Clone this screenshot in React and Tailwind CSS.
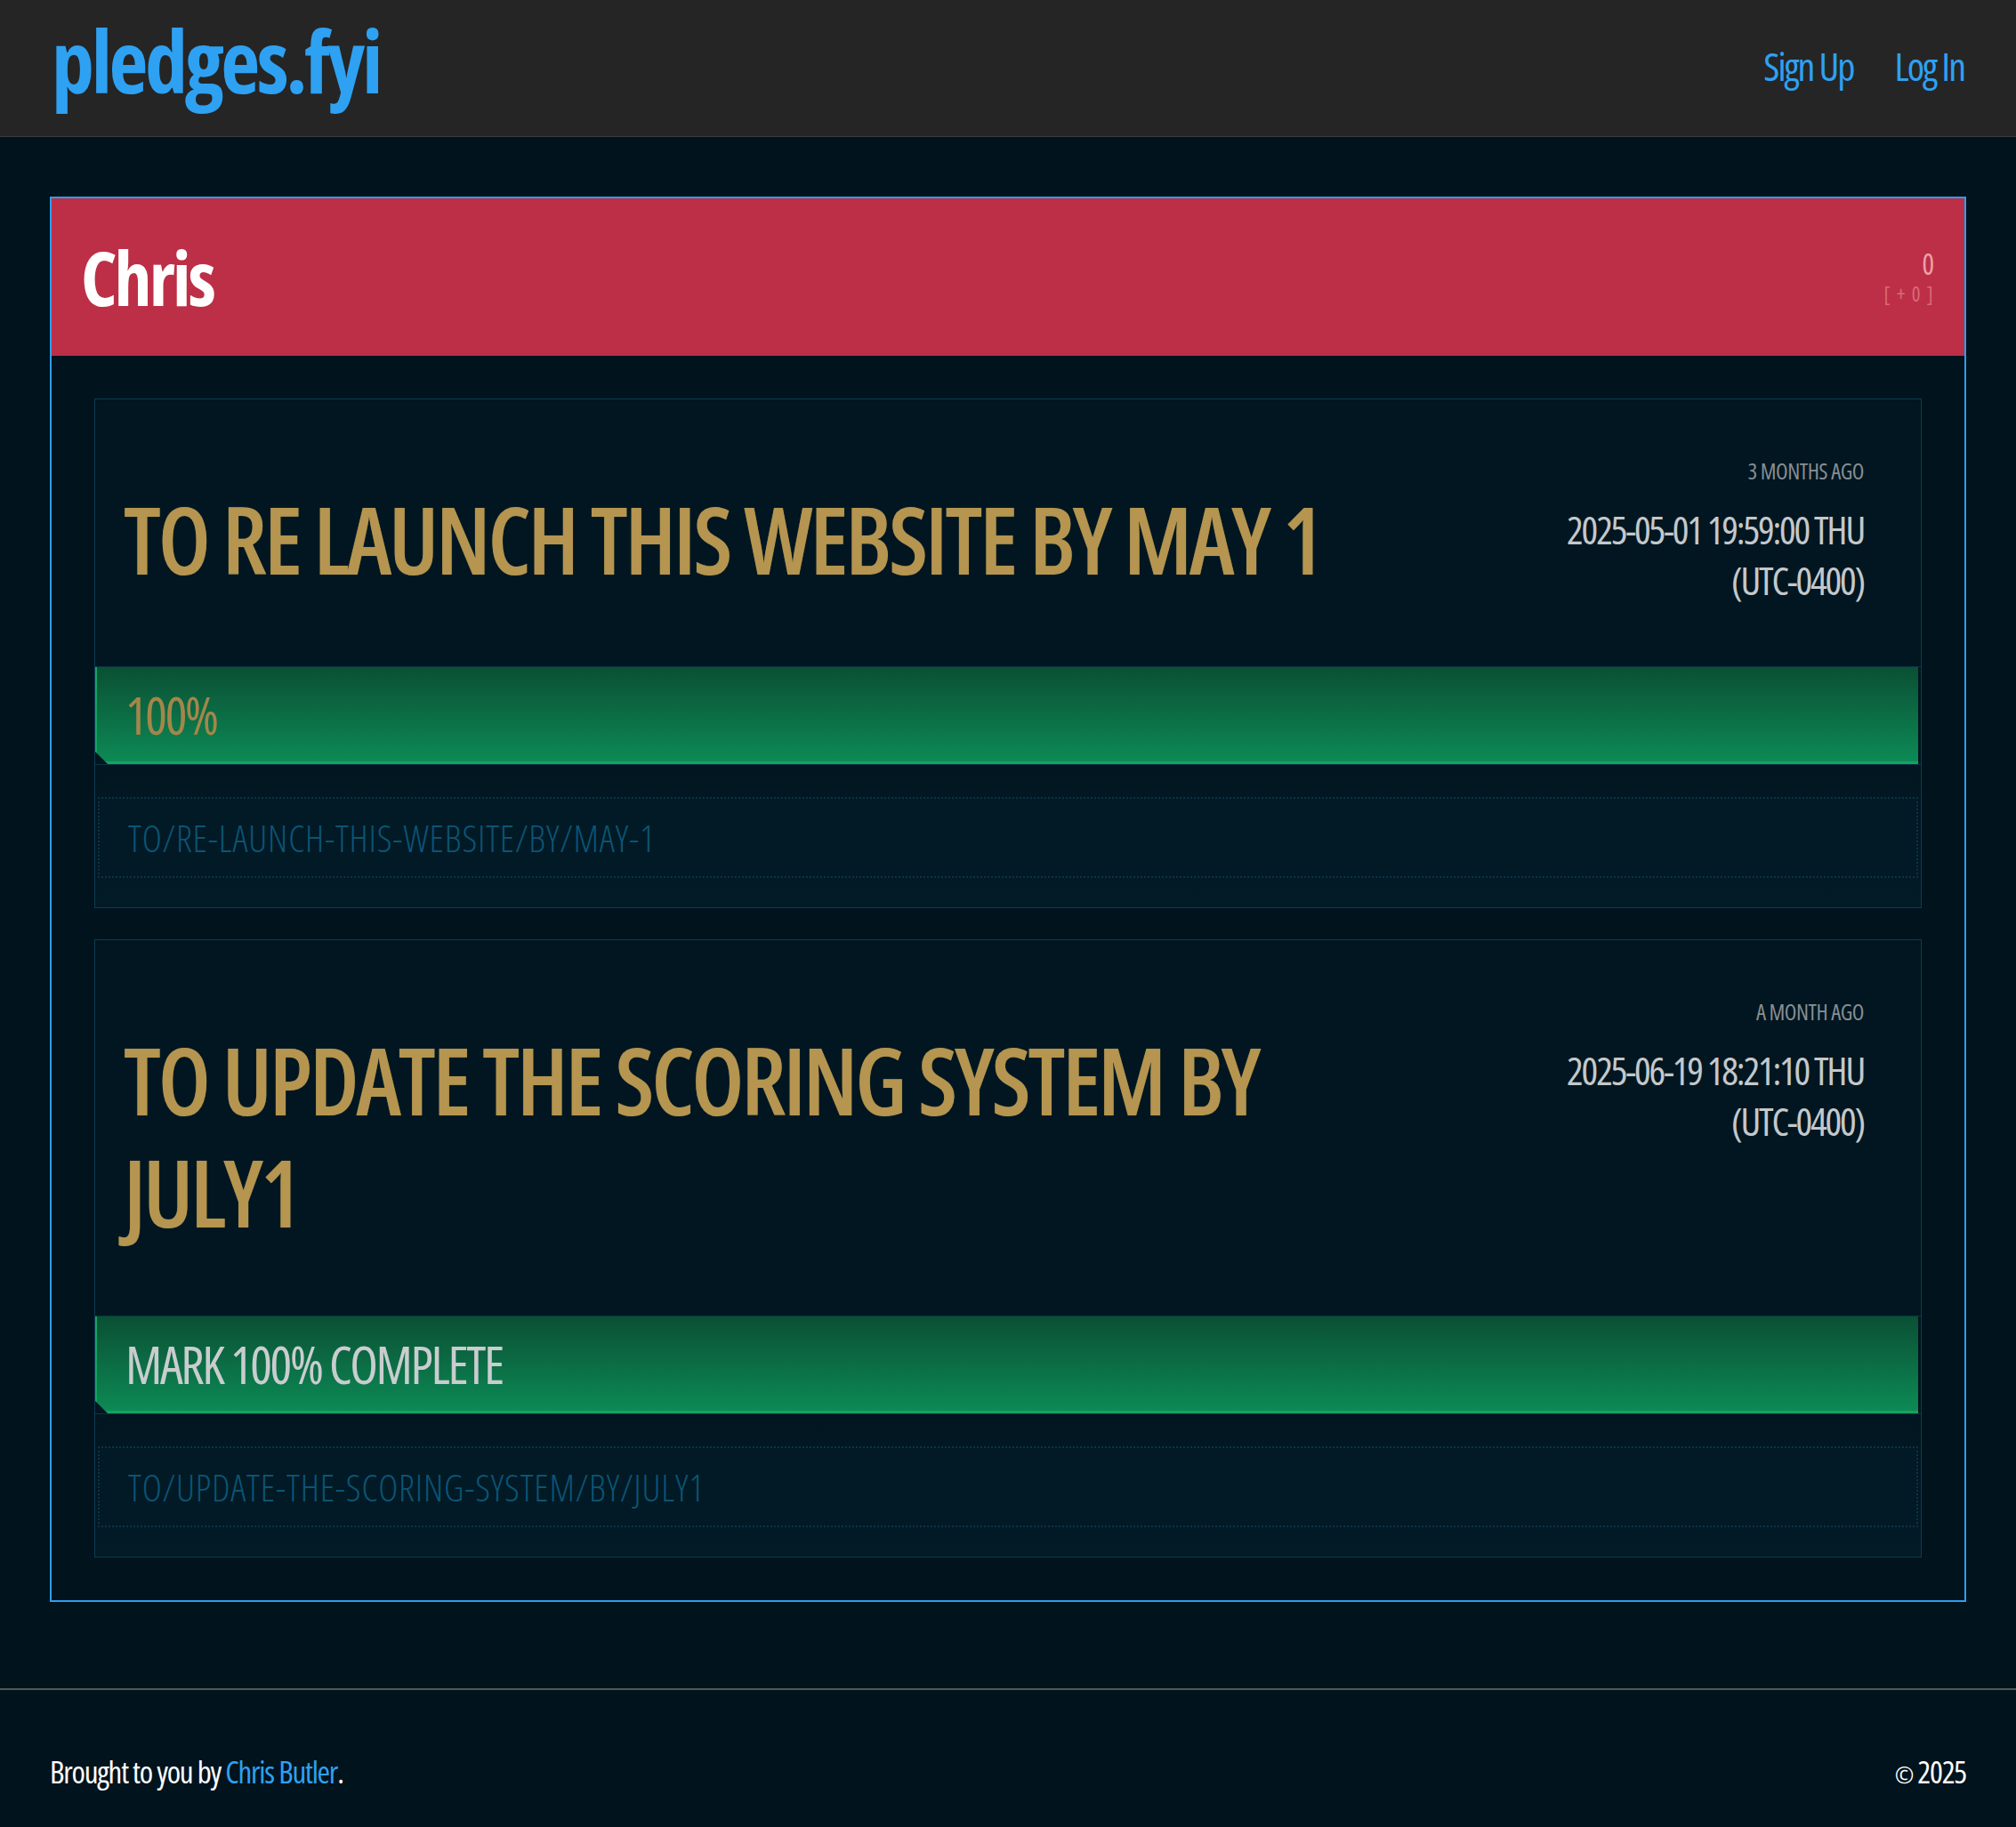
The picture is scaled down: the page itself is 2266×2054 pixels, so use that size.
const pledges = [
  {
    title: "TO RE LAUNCH THIS WEBSITE BY MAY 1",
    ago: "3 MONTHS AGO",
    date: "2025-05-01 19:59:00 THU",
    tz: "(UTC-0400)",
    bar: "100%",
    barClass: "text-[#a4864a]",
    slug: "TO/RE-LAUNCH-THIS-WEBSITE/BY/MAY-1",
  },
  {
    title: "TO UPDATE THE SCORING SYSTEM BY JULY1",
    ago: "A MONTH AGO",
    date: "2025-06-19 18:21:10 THU",
    tz: "(UTC-0400)",
    bar: "MARK 100% COMPLETE",
    barClass: "text-[#c9cdcf]",
    slug: "TO/UPDATE-THE-SCORING-SYSTEM/BY/JULY1",
  },
];

function PledgeCard({ pledge }) {
  return (
    <div className="border border-[#0d3b52] bg-[#011620]">
      {/* Title + date */}
      <div className="flex items-start justify-between pt-16 pb-[68px]">
        <h2 className="mt-[30px] mb-[8px] w-[1400px] pl-8 text-[104px] leading-[126px] font-semibold tracking-[-0.03em] text-[#b5954f] [text-shadow:0_0_1px_rgba(255,225,150,0.35)]">
          {pledge.title}
        </h2>
        <div className="flex-none pr-16 text-right">
          <div className="text-[25px] leading-[32px] tracking-[-0.02em] text-[#868e94]">{pledge.ago}</div>
          <div className="mt-[22px] text-[44px] leading-[57px] tracking-[-0.05em] text-[#c4c8cb]">
            <div>{pledge.date}</div>
            <div>{pledge.tz}</div>
          </div>
        </div>
      </div>

      {/* Progress bar */}
      <div className="border-y border-[#0b3344] pr-[3px]">
        <div className="flex h-[109px] items-center border-b-[3px] border-l-2 border-[#14a362] bg-gradient-to-b from-[#0a5034] to-[#0c8a55] px-8 [clip-path:polygon(0_0,100%_0,100%_100%,14px_100%,0_calc(100%-14px))]">
          <span className={`text-[58px] tracking-[-0.04em] ${pledge.barClass}`}>{pledge.bar}</span>
        </div>
      </div>

      {/* Slug */}
      <div className="bg-gradient-to-b from-[#011620] to-[#021b27] px-[3px] pt-[36px] pb-[33px]">
        <div className="flex h-[91px] items-center border-2 border-dotted border-[#0d3245] bg-[#011a25] px-8">
          <span className="text-[42px] font-light tracking-[0.02em] text-[#0c5475]">{pledge.slug}</span>
        </div>
      </div>
    </div>
  );
}

export default function App() {
  return (
    <div className="min-h-screen bg-[#01131d] font-['Open_Sans',sans-serif] [font-stretch:75%]">
      {/* Header */}
      <header className="flex h-[154px] items-center justify-between border-b border-[#3b3b3b] bg-[#252525] px-[58px]">
        <a className="mb-[18px] text-[96px] leading-none font-bold tracking-[-0.035em] text-[#2ea1f2]">pledges.fyi</a>
        <nav className="mb-[6px] flex items-center gap-[46px] text-[44px] font-medium tracking-[-0.045em] text-[#2ea1f2]">
          <a>Sign Up</a>
          <a>Log In</a>
        </nav>
      </header>

      {/* Main */}
      <main className="px-[56px] pt-[67px] pb-[97px]">
        <section className="border-2 border-[#2f9eee]">
          <div className="flex h-[177px] items-center justify-between bg-[#bd2f46] pr-[34px] pl-[33px]">
            <h1 className="text-[84px] font-bold tracking-[-0.035em] text-white">Chris</h1>
            <div className="text-right leading-none">
              <div className="text-[32px] text-[#eda0aa]">0</div>
              <div className="mt-[6px] text-[23px] tracking-[0.06em] text-[#d86a7a]">[ + 0 ]</div>
            </div>
          </div>
          <div className="flex flex-col gap-[35px] p-12">
            {pledges.map((p) => (
              <PledgeCard key={p.slug} pledge={p} />
            ))}
          </div>
        </section>
      </main>

      {/* Footer */}
      <footer className="flex items-center justify-between border-t-2 border-[#57574f] px-[56px] pt-[66px] pb-[40px] text-[35px] font-medium tracking-[-0.035em] text-white">
        <p>
          Brought to you by <a className="text-[#2ea1f2]">Chris Butler</a>.
        </p>
        <p>
          <span className="text-[26px]">©</span> 2025
        </p>
      </footer>
    </div>
  );
}
